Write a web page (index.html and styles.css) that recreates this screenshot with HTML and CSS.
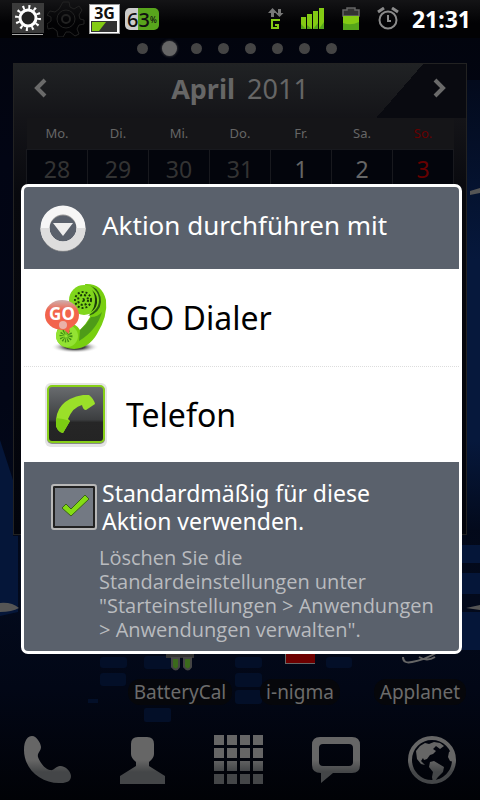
FILE: index.html
```html
<!DOCTYPE html>
<html lang="de">
<head>
    <meta charset="UTF-8">
    <meta name="viewport" content="width=device-width, initial-scale=1.0">
    <title>Aktion durchführen mit</title>
    <link rel="stylesheet" href="styles.css">
</head>
<body>
    <svg class="wallpaper" viewBox="0 0 480 800" preserveAspectRatio="none" aria-hidden="true">
        <defs>
            <linearGradient id="sky" x1="0" y1="0" x2="0" y2="1">
                <stop offset="0" stop-color="#02040c"/>
                <stop offset="0.2" stop-color="#020514"/>
                <stop offset="0.5" stop-color="#020616"/>
                <stop offset="0.75" stop-color="#030a1c"/>
                <stop offset="0.86" stop-color="#020716"/>
                <stop offset="1" stop-color="#010206"/>
            </linearGradient>
            <linearGradient id="edge" x1="0" y1="0" x2="0" y2="1">
                <stop offset="0" stop-color="#030a1c"/>
                <stop offset="0.4" stop-color="#06183c"/>
                <stop offset="0.8" stop-color="#06183c"/>
                <stop offset="1" stop-color="#030a1c"/>
            </linearGradient>
        </defs>
        <rect width="480" height="800" fill="url(#sky)"/>
        <rect x="467" y="80" width="13" height="450" fill="url(#edge)"/>
        <path d="M0 440L13 480V536H18V612L0 616z" fill="#051639"/>
        <path d="M462 545H480V563H462zM462 573H480V594H462zM462 612H480V650H462z" fill="#051639"/>
        <g fill="#030f28">
            <rect x="100" y="657" width="27" height="11" rx="3"/>
            <rect x="100" y="673" width="26" height="13" rx="3"/>
            <rect x="144" y="656" width="28" height="13" rx="3"/>
            <rect x="144" y="708" width="27" height="14" rx="2"/>
            <rect x="235" y="657" width="27" height="11" rx="3"/>
            <rect x="235" y="673" width="27" height="14" rx="3"/>
            <rect x="235" y="690" width="27" height="14" rx="3"/>
            <rect x="326" y="657" width="26" height="11" rx="3"/>
            <rect x="88" y="699" width="10" height="4"/>
        </g>
        <path d="M0 603Q12 602 19 608Q12 612 0 612zM480 605L466 608L480 610zM470 191L480 188V193L470 195z" fill="#555"/>
    </svg>

    <header class="statusbar">
        <div class="notifications">
            <svg width="32" height="34" viewBox="0 0 32 34">
                <rect y="1" width="32" height="30" fill="#3b3b3b"/>
                <rect y="32" width="31" height="1" fill="#aaa"/>
                <circle cx="16" cy="16" r="11" fill="none" stroke="#fff" stroke-width="4" stroke-dasharray="2 3.76"/>
                <circle cx="16" cy="16" r="8" fill="#222" stroke="#fff" stroke-width="3"/>
            </svg>
            <svg width="38" height="36" viewBox="0 0 38 36" fill="none" stroke="#222">
                <path d="M16 1h6l1 5 4 2 5-3 3 4-3 5 1 4 4 1v4l-5 1-2 4 2 5-4 2-5-4h-4l-3 5h-5l-1-6-4-3-5 1-1-5 4-3v-4L0 14l3-4 5 1 4-3z"/>
                <circle cx="19" cy="18" r="9"/>
                <circle cx="19" cy="18" r="4" stroke-width="2"/>
            </svg>
            <div class="network">
                <span>3G</span>
                <svg width="26" height="11" viewBox="0 0 26 11">
                    <rect width="26" height="11" fill="#333"/>
                    <path d="M1 1H15L8 10H1z" fill="#84cb14"/>
                </svg>
            </div>
            <div class="percent">63<small>%</small></div>
        </div>
        <div class="system">
            <svg width="16" height="22" viewBox="0 0 16 22">
                <path d="M4.500 0l5 5H6v4H3V5H0zM11.500 9l4-4H13V1h-3v4H7.500z" fill="#777"/>
                <path d="M12 11H3v10h8v-5H7v2h2v1H5v-6h7z" fill="#84cb14"/>
            </svg>
            <svg width="24" height="22" viewBox="0 0 24 22">
                <path d="M0 9h5v12H0zM6 6h5v15H6zM12 3h5v18h-5zM18 0h5v21h-5z" fill="#84cb14"/>
                <path d="M0 21v-5l5 5zM6 21v-4l5 4zM12 21l5-6v6zM18 21l5-7v7z" fill="#55a51a"/>
            </svg>
            <svg width="18" height="24" viewBox="0 0 18 24">
                <path d="M1 9V3h4V1h8v2h4v6z" fill="#333" stroke="#666" stroke-width="1.500"/>
                <path d="M1 9h16v14H1z" fill="#84cb14"/>
                <path d="M1 23v-7q8 3 16-1v8z" fill="#55a51a"/>
            </svg>
            <svg width="22" height="24" viewBox="0 0 22 24" fill="none" stroke="#8a8a8a" stroke-width="2">
                <circle cx="11" cy="13" r="8.500"/>
                <path d="M11 8v6h3"/>
                <path d="M1 5l6-4M21 5l-6-4" stroke-width="3"/>
            </svg>
            <time class="clock">21:31</time>
        </div>
    </header>

    <div class="pages">
        <i></i><i class="current"></i><i></i><i></i><i></i><i></i><i></i><i></i>
    </div>

    <section class="calendar">
        <div class="month">
            <button type="button" aria-label="Vorheriger Monat">
                <svg width="14" height="20" viewBox="0 0 14 20"><path d="M11 2L3 10l8 8"/></svg>
            </button>
            <h1><b>April</b> <span>2011</span></h1>
            <button type="button" aria-label="Nächster Monat">
                <svg width="14" height="20" viewBox="0 0 14 20"><path d="M3 2l8 8-8 8"/></svg>
            </button>
        </div>
        <table>
            <thead>
                <tr><th>Mo.</th><th>Di.</th><th>Mi.</th><th>Do.</th><th>Fr.</th><th>Sa.</th><th class="sunday">So.</th></tr>
            </thead>
            <tbody>
                <tr>
                    <td class="other">28</td><td class="other">29</td><td class="other">30</td><td class="other">31</td>
                    <td>1</td><td>2</td><td class="sunday">3</td>
                </tr>
            </tbody>
        </table>
    </section>

    <div class="apps">
        <a href="#">
            <svg width="32" height="20" viewBox="0 0 32 20">
                <path d="M2 0h28v7H2z" fill="#333"/>
                <path d="M8 7h7v9q-3 5-7 0zM20 7h7v9q-3 5-7 0z" fill="#3b6a1c" stroke="#444" stroke-width="2"/>
            </svg>
            <span>BatteryCal</span>
        </a>
        <a href="#">
            <svg width="30" height="20" viewBox="0 0 30 20"><path d="M0 0h30v13H0z" fill="#666"/><path d="M1 0h29v12H1z" fill="#6d0000"/></svg>
            <span>i-nigma</span>
        </a>
        <a href="#">
            <svg width="40" height="20" viewBox="0 0 40 20"><path d="M3 6q0 7 9 5Q24 9 36 2M19 6q8 5 16 0" fill="none" stroke="#666" stroke-width="2"/></svg>
            <span>Applanet</span>
        </a>
    </div>

    <nav class="dock">
        <button type="button" aria-label="Telefon">
            <svg width="48" height="48" viewBox="0 0 48 48">
                <defs>
                    <linearGradient id="fade" gradientUnits="userSpaceOnUse" x1="0" y1="0" x2="0" y2="48">
                        <stop offset="0.5" stop-color="#666"/>
                        <stop offset="0.75" stop-color="#444648"/>
                    </linearGradient>
                </defs>
                <path d="M0 14C0 4 4 0 8 0c5 0 9 8 9 11 0 4-4 6-3 10 2 6 8 13 12 13 4 1 6-4 10-4 6 0 11 6 11 10 0 5-4 7-10 7C18 48 0 34 0 14z" fill="url(#fade)"/>
            </svg>
        </button>
        <button type="button" aria-label="Kontakte">
            <svg width="46" height="48" viewBox="0 0 46 48"><path d="M11 8q0-7 7-7h9q7 0 7 7v10q0 4-5 8v4l16 10v8H0v-8l16-10v-4q-5-4-5-8z" fill="url(#fade)"/></svg>
        </button>
        <button type="button" aria-label="Alle Apps">
            <svg width="50" height="50" viewBox="0 0 50 50">
                <path d="M0 0h10v10H0zM13 0h10v10H13zM26 0h10v10H26zM39 0h10v10H39zM0 13h10v10H0zM13 13h10v10H13zM26 13h10v10H26zM39 13h10v10H39zM0 26h10v10H0zM13 26h10v10H13zM26 26h10v10H26zM39 26h10v10H39zM0 39h10v10H0zM13 39h10v10H13zM26 39h10v10H26zM39 39h10v10H39z" fill="url(#fade)"/>
            </svg>
        </button>
        <button type="button" aria-label="Nachrichten">
            <svg width="48" height="48" viewBox="0 0 48 48"><path fill-rule="evenodd" d="M8 1h32q8 0 8 8v20q0 8-8 8H21L9 47V37Q0 37 0 29V9q0-8 8-8zM11 8q-4 0-4 4v14q0 4 4 4h26q4 0 4-4V12q0-4-4-4z" fill="url(#fade)"/></svg>
        </button>
        <button type="button" aria-label="Browser">
            <svg width="48" height="48" viewBox="0 0 48 48" fill="url(#fade)">
                <circle cx="24" cy="24" r="22" fill="none" stroke="url(#fade)" stroke-width="4"/>
                <path d="M12 10l5-3 4 1 5-2 6 1 4 3-4 3-4-3-3 3 3 2-3 3-3 1-3 4-3 1-1-2-2 3 2 2 2 2-4-1-4-5-1-8zM22 26l4-1 5 3 5 3-1 5-5 5-3 4-2 2-1-6 1-5-4-5zM44 14l-3 2-1 5 2 4 4 1V19z"/>
            </svg>
        </button>
    </nav>

    <div class="overlay">
        <form class="dialog" role="dialog" aria-labelledby="title">
            <div class="dialog-header">
                <svg width="46" height="48" viewBox="0 0 46 48">
                    <circle cx="23" cy="25" r="18" fill="none" stroke="#999" stroke-width="9"/>
                    <circle cx="23" cy="24" r="18" fill="none" stroke="#f6f6f6" stroke-width="9"/>
                    <path d="M5 24a18 18 0 0 0 36 0" fill="none" stroke="#ddd" stroke-width="9"/>
                    <path d="M13 19h20L23 32z" fill="#eee"/>
                </svg>
                <h2 id="title">Aktion durchführen mit</h2>
            </div>

            <button type="button" class="choice">
                <svg width="64" height="72" viewBox="0 0 64 72">
                    <defs>
                        <radialGradient id="shadow">
                            <stop offset="0.4" stop-color="#444"/>
                            <stop offset="1" stop-color="#fff" stop-opacity="0"/>
                        </radialGradient>
                        <linearGradient id="bubble" x1="0" y1="0" x2="0" y2="1">
                            <stop offset="0" stop-color="#ccb0b0"/>
                            <stop offset="0.35" stop-color="#f2644c"/>
                            <stop offset="1" stop-color="#f2644c"/>
                        </linearGradient>
                    </defs>
                    <ellipse cx="31" cy="65" rx="24" ry="6" fill="url(#shadow)"/>
                    <path d="M41 2Q58 1 62 18 64 34 53 52 45 66 30 67 13 66 12 54 13 41 24 41 33 42 36 48 42 42 46 35z" fill="#78cf10"/>
                    <path d="M58 30Q53 48 35 59L36 48Q43 42 47 35 54 35 58 30z" fill="#4e9c18"/>
                    <path d="M47 4Q57 8 57 20 56 31 44 34 53 28 53 18 53 9 47 4z" fill="#2c5f10"/>
                    <circle cx="40" cy="18" r="15" fill="#80d61c"/>
                    <path d="M48 8q6 5 5 13-1 6-6 9 4-5 4-12 0-6-3-10z" fill="#1d3d0c"/>
                    <g fill="none" stroke="#193a08" stroke-width="2" stroke-dasharray="2 2">
                        <circle cx="39" cy="18" r="8"/>
                        <circle cx="39" cy="18" r="5"/>
                        <circle cx="39" cy="18" r="1"/>
                    </g>
                    <circle cx="23" cy="54" r="11" fill="#93e333"/>
                    <circle cx="22" cy="54" r="4" fill="none" stroke="#3f8d12" stroke-width="5" stroke-dasharray="1 1"/>
                    <path d="M17 45l8 7 1-8z" fill="#f2644c"/>
                    <ellipse cx="18" cy="33" rx="17" ry="15" fill="url(#bubble)"/>
                    <circle cx="19" cy="43" r="4" fill="#eab0a8"/>
                    <text x="18" y="38" class="go">GO</text>
                </svg>
                <span>GO Dialer</span>
            </button>
            <button type="button" class="choice">
                <svg width="64" height="72" viewBox="0 0 64 72">
                    <defs>
                        <linearGradient id="tile" x1="0" y1="0" x2="0" y2="1">
                            <stop offset="0" stop-color="#6a6d70"/>
                            <stop offset="0.6" stop-color="#3c3e40"/>
                            <stop offset="0.65" stop-color="#262626"/>
                            <stop offset="1" stop-color="#242424"/>
                        </linearGradient>
                    </defs>
                    <rect x="1" y="4" width="62" height="64" rx="6" fill="#e4e4e4"/>
                    <rect x="3" y="7" width="58" height="58" rx="5" fill="#888"/>
                    <rect x="4" y="7" width="56" height="56" rx="4" fill="url(#tile)" stroke="#86cf17" stroke-width="2"/>
                    <path d="M39 16l6 0q5 4 6 9l-9 6q-3 0-4-5-9 2-14 14l2 2-7 12q-5-1-7-7-2-26 27-31z" fill="#9be029"/>
                    <path d="M12 39l7 1 7 2-7 12q-5-1-7-7z" fill="#7ccc12"/>
                </svg>
                <span>Telefon</span>
            </button>

            <div class="dialog-footer">
                <label class="default">
                    <span class="check">
                        <input type="checkbox" checked>
                        <svg width="46" height="46" viewBox="0 0 46 46">
                            <path d="M11 24l4-4 5 5 14-14 4 4-18 17z" fill="#84dc14" stroke="#3c6418"/>
                        </svg>
                    </span>
                    <span>Standardmäßig für diese Aktion verwenden.</span>
                </label>
                <p>Löschen Sie die Standardeinstellungen unter "Starteinstellungen &gt; Anwendungen &gt; Anwendungen verwalten".</p>
            </div>
        </form>
    </div>
</body>
</html>
```
FILE: styles.css
```css
* {
    box-sizing: border-box;
}
body {
    font-family: 'Noto Sans', 'Open Sans', sans-serif;
    background-color: #02040c;
    color: #666;
    margin: 0;
    min-height: 100vh;
    display: flex;
    flex-direction: column;
    position: relative;
}
svg {
    display: block;
    flex: none;
}
button {
    font: inherit;
    color: inherit;
    background: none;
    border: 0;
    padding: 0;
    cursor: pointer;
}
.wallpaper {
    position: absolute;
    width: 100%;
    height: 100%;
    z-index: -1;
}

/* status bar */
.statusbar {
    display: flex;
    justify-content: space-between;
    height: 38px;
    padding: 0 9px 0 12px;
    background: linear-gradient(#141416, #020204 60%);
}
.notifications,
.system {
    display: flex;
    align-items: center;
}
.notifications {
    gap: 3px;
}
.network {
    width: 31px;
    height: 30px;
    margin: 0 2px 0 1px;
    padding: 1px;
    background: #fff;
    border: 1px solid #999;
    color: #111;
    font-size: 16px;
    font-weight: bold;
    line-height: 15px;
    text-align: center;
}
.percent {
    display: flex;
    align-items: center;
    height: 22px;
    padding: 0 2px;
    border-radius: 5px;
    background: linear-gradient(90deg, #ccc 38%, #58a51c 38%);
    color: #111;
    font-size: 20px;
    font-weight: 500;
}
.percent small {
    font-size: 8px;
}
.system {
    gap: 17px;
}
.clock {
    color: #fff;
    font-size: 23px;
    font-weight: bold;
    margin-left: -4px;
}

/* home screen pages */
.pages {
    display: flex;
    justify-content: center;
    align-items: center;
    gap: 16px;
    height: 20px;
    margin-bottom: 5px;
    padding-right: 6px;
}
.pages i {
    width: 11px;
    height: 11px;
    border-radius: 50%;
    background: #444;
}
.pages .current {
    width: 15px;
    height: 15px;
    margin: 0 -2px;
    background: #666;
    box-shadow: 0 0 3px #555;
}

/* calendar widget */
.calendar {
    height: 472px;
    margin: 0 13px;
    padding: 0 12px;
    border: 1px solid #222;
    background: linear-gradient(131deg, transparent 82%, #090a10 82%) no-repeat 0 0 / 100% 54px,
        linear-gradient(#202224, #141418 54px, #08090e 130px, #02040c);
}
.month {
    display: flex;
    justify-content: space-between;
    align-items: center;
    height: 54px;
    padding: 0 8px 6px;
}
.month path {
    fill: none;
    stroke: #6a6a6a;
    stroke-width: 4;
}
.month h1 {
    margin: 0;
    font-size: 27px;
    font-weight: normal;
}
.month span {
    margin-left: 5px;
}
.calendar table {
    width: 100%;
    table-layout: fixed;
    border-collapse: collapse;
}
.calendar th {
    height: 31px;
    padding: 0;
    background: #151518;
    font-size: 13px;
    font-weight: normal;
}
.calendar td {
    height: 40px;
    padding: 0;
    border: 1px solid #18191e;
    background: #03050c;
    font-size: 23px;
    text-align: center;
}
.calendar .other {
    color: #333;
}
.calendar .sunday {
    color: #600;
}

/* app shortcuts */
.apps {
    display: grid;
    grid-template-columns: repeat(3, 1fr);
    margin: 116px 0 0 120px;
}
.apps a {
    display: flex;
    flex-direction: column;
    align-items: center;
    gap: 8px;
    color: #6c6c6c;
    font-size: 19px;
    line-height: 26px;
    text-decoration: none;
}
.apps span {
    padding: 0 6px;
    border-radius: 12px;
    background: #06070b;
}

.dock {
    display: flex;
    justify-content: space-between;
    align-items: center;
    margin-top: auto;
    padding: 0 24px 15px;
}

/* dialog */
.overlay {
    position: absolute;
    top: 184px;
    left: 21px;
    right: 18px;
}
.dialog {
    overflow: hidden;
    border: 3px solid #fff;
    border-radius: 7px;
    background: #fff;
}
.dialog-header {
    display: flex;
    align-items: center;
    gap: 16px;
    height: 82px;
    padding: 0 16px;
    background: #5a616c;
    color: #fff;
}
.dialog-header h2 {
    margin: 0;
    padding-bottom: 6px;
    font-size: 26px;
    font-weight: normal;
}
.choice {
    display: flex;
    align-items: center;
    gap: 18px;
    width: 100%;
    height: 97px;
    padding: 0 20px;
    color: #000;
    font-size: 32px;
    text-align: left;
}
.choice + .choice {
    border-top: 1px dotted #ddd;
    height: 96px;
}
.go {
    fill: #fff;
    font-size: 17px;
    font-weight: bold;
    text-anchor: middle;
}
.dialog-footer {
    padding: 17px 24px 9px 27px;
    background: #5a616c;
}
.default {
    display: flex;
    align-items: center;
    gap: 5px;
    color: #fff;
    font-size: 23px;
    line-height: 28px;
}
.check {
    display: grid;
}
.check > * {
    grid-area: 1 / 1;
}
.check input {
    appearance: none;
    width: 46px;
    height: 46px;
    margin: 0;
    border: 2px solid #b8b8b8;
    border-radius: 3px;
    background: #737983;
    box-shadow: inset 0 0 0 2px #222;
}
.check svg {
    pointer-events: none;
}
.dialog-footer p {
    margin: 11px 0 0 48px;
    color: #b9bbbf;
    font-family: 'Open Sans', 'Noto Sans', sans-serif;
    font-size: 20px;
    line-height: 24px;
}
```
